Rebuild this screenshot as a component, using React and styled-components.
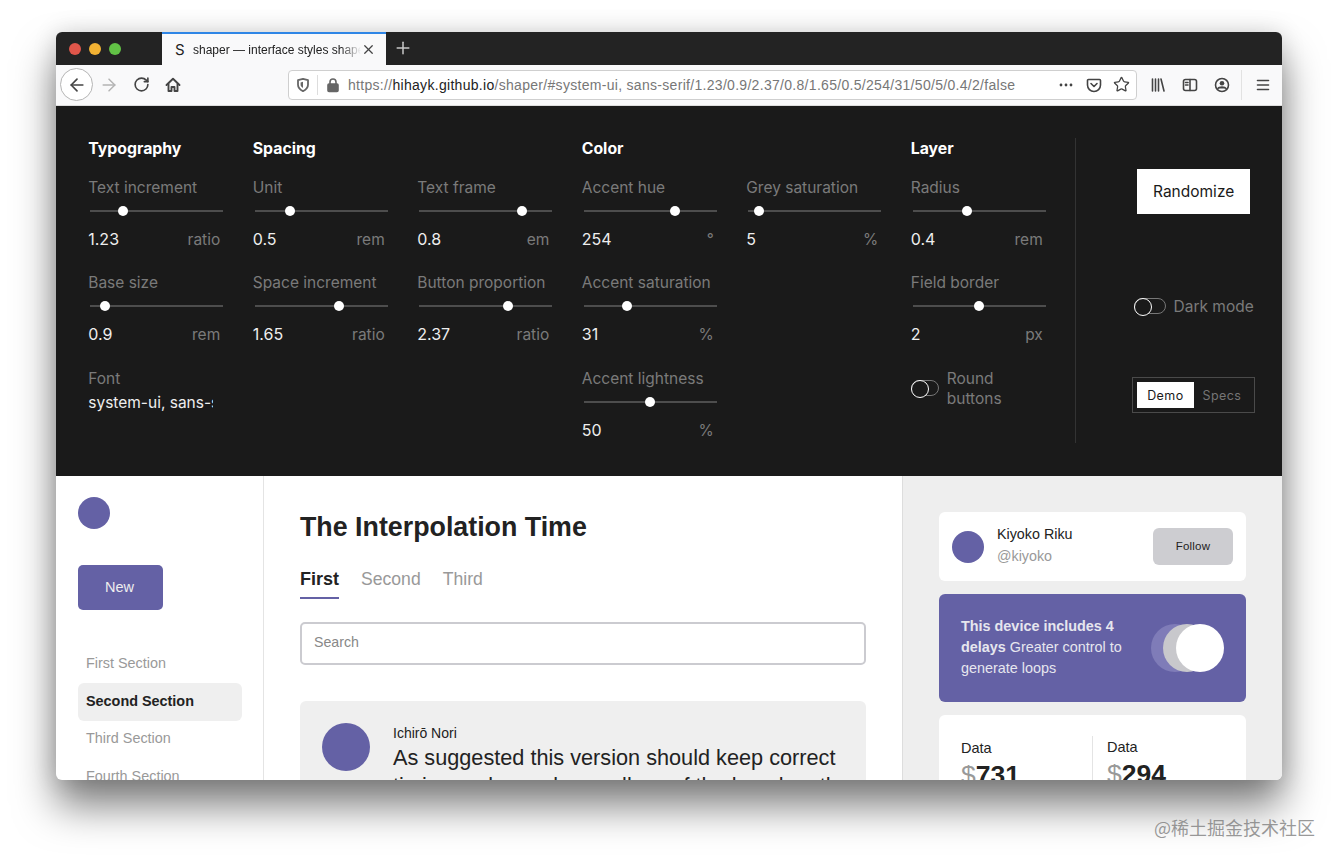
import React from 'react';
import styled, { createGlobalStyle } from 'styled-components';
import { ArrowLeft, ArrowRight, RotateCw, Star, Plus, X } from 'lucide-react';

const accent = '#6461a5';
const darkBg = '#1a1a1a';
const helvetica = '"Liberation Sans", Arial, sans-serif';

const GlobalStyle = createGlobalStyle`
  * { box-sizing: border-box; }
  html, body { margin: 0; height: 100%; background: #fff; overflow: hidden; }
  body { font-family: Inter, sans-serif; }
`;

const Page = styled.div`
  position: relative;
  height: 860px;
  padding: 32px 56px;
`;

const Watermark = styled.div`
  position: absolute;
  left: 1154px;
  top: 816px;
  font-family: "Noto Sans CJK SC", sans-serif;
  font-size: 18px;
  line-height: 22px;
  color: rgba(120, 120, 120, 0.75);
  white-space: nowrap;
`;

const Window = styled.div`
  height: 748px;
  display: flex;
  flex-direction: column;
  border-radius: 6px;
  overflow: hidden;
  background: #fff;
  box-shadow: 0 26px 40px rgba(0, 0, 0, 0.5), 0 0 24px rgba(0, 0, 0, 0.14);
`;

/* browser chrome */
const TabBar = styled.div`
  height: 33px;
  flex: none;
  display: flex;
  align-items: center;
  background: #232323;
`;

const Lights = styled.div`
  width: 106px;
  padding-left: 13px;
  display: flex;
  gap: 8px;
`;

const Light = styled.span`
  width: 12px;
  height: 12px;
  border-radius: 50%;
  background: ${p => p.$color};
`;

const Tab = styled.div`
  width: 224px;
  height: 33px;
  display: flex;
  align-items: center;
  padding: 0 10px 0 13px;
  background: #f9f9fa;
  border-top: 2px solid #2f86e6;
  color: #222;
`;

const Favicon = styled.span`
  width: 18px;
  font-size: 15px;
  font-family: Inter, sans-serif;
`;

const TabTitle = styled.span`
  flex: 1;
  font-family: ${helvetica};
  font-size: 12px;
  white-space: nowrap;
  overflow: hidden;
  -webkit-mask-image: linear-gradient(to right, #000 88%, transparent 100%);
  mask-image: linear-gradient(to right, #000 88%, transparent 100%);
`;

const NewTab = styled.span`
  margin: 0 0 2px 7px;
  display: flex;
  color: #c8c8c8;
`;

const Toolbar = styled.div`
  height: 41px;
  flex: none;
  display: flex;
  align-items: center;
  padding: 0 0 1px 4px;
  background: #f9f9fa;
  border-bottom: 1px solid #ddd;
  color: #444;
`;

const BackButton = styled.span`
  width: 33px;
  height: 33px;
  display: flex;
  align-items: center;
  justify-content: center;
  border: 1px solid #b5b5b5;
  border-radius: 50%;
  background: #fff;
`;

const NavIcon = styled.span`
  width: 32px;
  display: flex;
  justify-content: center;
  color: ${p => (p.$dim ? '#b4b4b4' : 'inherit')};
`;

const UrlBar = styled.div`
  width: 849px;
  height: 30px;
  margin-left: 99px;
  display: flex;
  align-items: center;
  background: #fff;
  border: 1px solid #cfcfcf;
  border-radius: 4px;
  padding: 0 6px;
  color: #666;
`;

const UrlDivider = styled.span`
  width: 1px;
  height: 20px;
  margin: 0 7px 0 6px;
  background: #ddd;
`;

const UrlText = styled.span`
  flex: 1;
  margin-left: 7px;
  font-family: ${helvetica};
  font-size: 14px;
  letter-spacing: 0.3px;
  color: #777;
  white-space: nowrap;
  overflow: hidden;
  b { font-weight: 400; color: #222; }
`;

const UrlActions = styled.span`
  display: flex;
  align-items: center;
  gap: 12px;
  color: #444;
  svg:last-child { margin-left: -1px; }
`;

const ToolGroup = styled.div`
  display: flex;
  align-items: center;
  margin-left: 5px;
`;

const ToolDivider = styled.span`
  width: 1px;
  height: 30px;
  margin: 0 5px 0 3px;
  background: #e2e2e2;
`;

/* control panel */
const Panel = styled.div`
  height: 370px;
  flex: none;
  display: flex;
  padding: 32px 26px 33px 32.25px;
  background: ${darkBg};
  color: #eee;
`;

const Section = styled.section`
  width: ${p => p.$span * 164.5}px;
  flex: none;
`;

const SectionTitle = styled.h3`
  margin: 0 0 18px;
  padding-top: 1px;
  font-size: 15.8px;
  line-height: 20px;
  font-weight: 700;
  color: #fff;
`;

const SectionColumns = styled.div`
  display: flex;
`;

const SectionColumn = styled.div`
  width: 164.5px;
  flex: none;
`;

const Control = styled.div`
  width: 135px;
  height: 95px;
  &:nth-child(2) { height: 96px; }
`;

const ControlLabel = styled.div`
  padding-top: 1px;
  margin-bottom: -1px;
  font-size: 15.5px;
  line-height: 20px;
  color: #7a7a7a;
  white-space: ${p => (p.$wrap ? 'normal' : 'nowrap')};
`;

const Track = styled.div`
  position: relative;
  height: 2px;
  width: 133px;
  margin: 13px 0 17px 2px;
  background: #4d4d4d;
`;

const Thumb = styled.span`
  position: absolute;
  left: ${p => p.$at}px;
  top: -4px;
  width: 10px;
  height: 10px;
  margin-left: -5px;
  border-radius: 50%;
  background: #fff;
`;

const ValueRow = styled.div`
  display: flex;
  justify-content: space-between;
  align-items: baseline;
  padding-right: 3px;
  font-size: 16px;
  line-height: 20px;
`;

const Unit = styled.span`
  font-size: 15.5px;
  color: #7a7a7a;
`;

const FontValue = styled.div`
  width: 125px;
  margin-top: 4px;
  padding-top: 1px;
  overflow: hidden;
  white-space: nowrap;
  font-size: 15.5px;
  line-height: 20px;
`;

const ToggleRow = styled.div`
  display: flex;
  align-items: center;
  gap: 8px;
`;

const Toggle = styled.span`
  position: relative;
  width: ${p => p.$width}px;
  height: 16px;
  flex: none;
  border: 1px solid #777;
  border-radius: 8px;
  &::before {
    content: '';
    position: absolute;
    left: -1px;
    top: -1px;
    width: 16px;
    height: 16px;
    border: 1.5px solid #fff;
    border-radius: 50%;
    background: ${darkBg};
  }
`;

const Tools = styled.div`
  flex: 1;
  display: flex;
  flex-direction: column;
  align-items: center;
  padding: 31px 0 30px 55px;
  border-left: 1px solid #333;
`;

const Randomize = styled.button`
  width: 113px;
  height: 45px;
  padding: 0;
  border: 0;
  background: #fff;
  color: #1a1a1a;
  font-family: Inter, sans-serif;
  font-size: 15.5px;
`;

const DarkMode = styled(ToggleRow)`
  margin-top: 82px;
`;

const Segmented = styled.div`
  margin-top: auto;
  width: 123px;
  height: 36px;
  flex: none;
  display: flex;
  padding: 4px;
  border: 1px solid #4a4a4a;
`;

const Segment = styled.span`
  flex: 1;
  display: flex;
  align-items: center;
  justify-content: center;
  font-size: 12.5px;
  letter-spacing: 0.4px;
  background: ${p => (p.$active ? '#fff' : 'transparent')};
  color: ${p => (p.$active ? '#1a1a1a' : '#757575')};
`;

/* demo below the panel */
const Demo = styled.div`
  flex: 1;
  min-height: 0;
  display: flex;
  overflow: hidden;
  font-family: ${helvetica};
  color: #222;
`;

const Sidebar = styled.aside`
  width: 208px;
  flex: none;
  padding: 21px 21px 0 22px;
  border-right: 1px solid #e4e4e4;
`;

const Avatar = styled.span`
  display: block;
  width: ${p => p.$size}px;
  height: ${p => p.$size}px;
  flex: none;
  border-radius: 50%;
  background: ${accent};
`;

const NewButton = styled.button`
  display: block;
  width: 85px;
  height: 45px;
  margin: 36px 0 34px;
  padding: 0 2px 2px 0;
  border: 0;
  border-radius: 5px;
  background: ${accent};
  color: #eee;
  font-family: ${helvetica};
  font-size: 14.5px;
`;

const NavItem = styled.div`
  height: 38px;
  margin-bottom: ${p => p.$gap || 0}px;
  padding: 0 0 ${p => (p.$active ? 2 : 0)}px 8px;
  display: flex;
  align-items: center;
  border-radius: 6px;
  font-size: 14.4px;
  font-weight: ${p => (p.$active ? 700 : 400)};
  color: ${p => (p.$active ? '#222' : '#999')};
  background: ${p => (p.$active ? '#efefef' : 'transparent')};
`;

const Main = styled.main`
  flex: 1;
  min-width: 0;
  padding: 33px 36px 0;
`;

const Title = styled.h1`
  margin: 0;
  font-size: 26.8px;
  line-height: 36px;
  font-weight: 700;
  color: #222;
`;

const Tabs = styled.div`
  margin-top: 21px;
  display: flex;
  gap: 22px;
`;

const TabLink = styled.span`
  height: 33px;
  font-size: ${p => (p.$active ? 18 : 17.6)}px;
  line-height: 26px;
  font-weight: ${p => (p.$active ? 700 : 400)};
  color: ${p => (p.$active ? '#222' : '#999')};
  border-bottom: 2px solid ${p => (p.$active ? accent : 'transparent')};
`;

const SearchBox = styled.div`
  height: 43px;
  margin-top: 23px;
  padding: 0 0 3px 12px;
  display: flex;
  align-items: center;
  border: 2px solid #cbcbd0;
  border-radius: 5px;
  font-size: 14.2px;
  color: #888;
`;

const Post = styled.div`
  margin-top: 36px;
  height: 140px;
  display: flex;
  gap: 23px;
  padding: 22px;
  background: #efefef;
  border-radius: 6px;
`;

const PostAuthor = styled.div`
  font-size: 14px;
  line-height: 20px;
`;

const PostText = styled.div`
  margin-top: 1px;
  font-size: 21.7px;
  line-height: 28px;
  color: #222;
`;

const Aside = styled.aside`
  width: 380px;
  flex: none;
  display: flex;
  flex-direction: column;
  gap: 13px;
  padding: 36px 36px 0;
  background: #eee;
  border-left: 1px solid #ddd;
`;

const Card = styled.div`
  flex: none;
  height: ${p => p.$height}px;
  border-radius: 6px;
  background: ${p => (p.$accent ? accent : '#fff')};
`;

const ProfileCard = styled(Card)`
  display: flex;
  align-items: center;
  padding: 0 13px;
`;

const ProfileText = styled.div`
  flex: 1;
  margin-left: 13px;
  padding-bottom: 4px;
  line-height: 22px;
`;

const ProfileName = styled.div`
  font-size: 14.3px;
`;

const ProfileHandle = styled.div`
  font-size: 14.3px;
  color: #999;
`;

const FollowButton = styled.button`
  width: 80px;
  height: 37px;
  padding: 0 0 2px;
  border: 0;
  border-radius: 6px;
  background: #cdcdd1;
  color: #222;
  font-family: ${helvetica};
  font-size: 11.5px;
  letter-spacing: 0.2px;
`;

const DeviceCard = styled(Card)`
  display: flex;
  align-items: center;
  padding: 0 22px;
  color: #e6e6ee;
  font-size: 14.4px;
  line-height: 21px;
`;

const DeviceText = styled.div`
  width: 180px;
  margin-bottom: 2px;
  strong { font-weight: 700; }
`;

const Discs = styled.div`
  margin-left: auto;
  display: flex;
`;

const Disc = styled.span`
  width: 48px;
  height: 48px;
  margin-left: ${p => p.$overlap}px;
  border-radius: 50%;
  background: ${p => p.$color};
`;

const DataCard = styled(Card)`
  display: flex;
  padding: 21px 22px 0;
`;

const DataCell = styled.div`
  width: ${p => (p.$divided ? 'auto' : '131px')};
  flex: ${p => (p.$divided ? 1 : 'none')};
  padding-top: ${p => (p.$divided ? '1px' : '2px')};
  padding-left: ${p => (p.$divided ? '14px' : '0')};
  border-left: ${p => (p.$divided ? '1px solid #e4e4e4' : '0')};
`;

const DataLabel = styled.div`
  font-size: 14.5px;
  line-height: 20px;
`;

const DataValue = styled.div`
  font-size: 26.5px;
  line-height: 34px;
  font-weight: 700;
  color: #222;
  span { font-weight: 400; color: #999; }
`;

/* firefox toolbar glyphs */
const Glyph = ({ size = 16, weight = 1.6, children }) => (
  <svg width={size} height={size} viewBox="0 0 16 16" fill="none" stroke="currentColor" strokeWidth={weight} strokeLinecap="round" strokeLinejoin="round">
    {children}
  </svg>
);

const sections = [
  {
    title: 'Typography',
    columns: [[
      { label: 'Text increment', at: 33, value: '1.23', unit: 'ratio' },
      { label: 'Base size', at: 15, value: '0.9', unit: 'rem' },
      { label: 'Font', font: 'system-ui, sans-serif' },
    ]],
  },
  {
    title: 'Spacing',
    columns: [
      [
        { label: 'Unit', at: 35, value: '0.5', unit: 'rem' },
        { label: 'Space increment', at: 84, value: '1.65', unit: 'ratio' },
      ],
      [
        { label: 'Text frame', at: 103, value: '0.8', unit: 'em' },
        { label: 'Button proportion', at: 89, value: '2.37', unit: 'ratio' },
      ],
    ],
  },
  {
    title: 'Color',
    columns: [
      [
        { label: 'Accent hue', at: 91, value: '254', unit: '°' },
        { label: 'Accent saturation', at: 43, value: '31', unit: '%' },
        { label: 'Accent lightness', at: 66, value: '50', unit: '%' },
      ],
      [{ label: 'Grey saturation', at: 11, value: '5', unit: '%' }],
    ],
  },
  {
    title: 'Layer',
    columns: [[
      { label: 'Radius', at: 54, value: '0.4', unit: 'rem' },
      { label: 'Field border', at: 66, value: '2', unit: 'px' },
      { toggle: 'Round buttons' },
    ]],
  },
];

function ControlItem({ item }) {
  if (item.toggle) {
    return (
      <Control>
        <ToggleRow>
          <Toggle $width={28} />
          <ControlLabel $wrap>{item.toggle}</ControlLabel>
        </ToggleRow>
      </Control>
    );
  }
  if (item.font) {
    return (
      <Control>
        <ControlLabel>{item.label}</ControlLabel>
        <FontValue>{item.font}</FontValue>
      </Control>
    );
  }
  return (
    <Control>
      <ControlLabel>{item.label}</ControlLabel>
      <Track><Thumb $at={item.at} /></Track>
      <ValueRow>
        <span>{item.value}</span>
        <Unit>{item.unit}</Unit>
      </ValueRow>
    </Control>
  );
}

function BrowserChrome() {
  return (
    <>
      <TabBar>
        <Lights>
          <Light $color="#e0564a" />
          <Light $color="#f2b233" />
          <Light $color="#62c246" />
        </Lights>
        <Tab>
          <Favicon>S</Favicon>
          <TabTitle>shaper — interface styles shaper</TabTitle>
          <X size={15} strokeWidth={2} color="#444" />
        </Tab>
        <NewTab><Plus size={20} strokeWidth={1.8} /></NewTab>
      </TabBar>
      <Toolbar>
        <BackButton><ArrowLeft size={20} strokeWidth={2} /></BackButton>
        <NavIcon $dim><ArrowRight size={20} strokeWidth={1.8} /></NavIcon>
        <NavIcon><RotateCw size={17} strokeWidth={2.3} /></NavIcon>
        <NavIcon>
          <Glyph weight={1.9}>
            <path d="M1.500 8 8 1.800 14.500 8" />
            <path d="M3.500 7v7h3v-4h3v4h3V7" />
          </Glyph>
        </NavIcon>
        <UrlBar>
          <Glyph weight={1.8}>
            <path d="M8 1.800 3 3.200v4.600c0 3 2.200 5 5 6.400 2.800-1.400 5-3.400 5-6.400V3.200z" />
            <path d="M8 4.800 5.600 5.500v2.300c0 1.400 1 2.400 2.400 3.200z" fill="currentColor" stroke="none" />
          </Glyph>
          <UrlDivider />
          <Glyph>
            <path d="M5 7V5a3 3 0 0 1 6 0v2" />
            <rect x="3" y="7" width="10" height="7.500" rx="1" fill="currentColor" />
          </Glyph>
          <UrlText>https://<b>hihayk.github.io</b>/shaper/#system-ui, sans-serif/1.23/0.9/2.37/0.8/1.65/0.5/254/31/50/5/0.4/2/false</UrlText>
          <UrlActions>
            <Glyph>
              <circle cx="3" cy="8" r="1.400" fill="currentColor" stroke="none" />
              <circle cx="8" cy="8" r="1.400" fill="currentColor" stroke="none" />
              <circle cx="13" cy="8" r="1.400" fill="currentColor" stroke="none" />
            </Glyph>
            <Glyph>
              <path d="M2.500 2.500h11a1 1 0 0 1 1 1V8a6.500 6.500 0 0 1-13 0V3.500a1 1 0 0 1 1-1z" />
              <path d="M5 6.500 8 9.500l3-3" />
            </Glyph>
            <Star size={17} strokeWidth={1.8} />
          </UrlActions>
        </UrlBar>
        <ToolGroup>
          <NavIcon>
            <Glyph>
              <path d="M2.500 2v12M5.500 2v12M8.500 2v12M11 2l3 12" />
            </Glyph>
          </NavIcon>
          <NavIcon>
            <Glyph>
              <rect x="1.500" y="2.500" width="13" height="11" rx="2" />
              <path d="M8 2.500v11M3.500 5.500h2.500M3.500 8h2.500" />
            </Glyph>
          </NavIcon>
          <NavIcon>
            <Glyph>
              <circle cx="8" cy="8" r="6.500" />
              <circle cx="8" cy="6.200" r="2.300" fill="currentColor" stroke="none" />
              <path d="M4 11.500c1-2 7-2 8 0" fill="currentColor" />
            </Glyph>
          </NavIcon>
          <ToolDivider />
          <NavIcon>
            <Glyph>
              <path d="M2.500 3.500h11M2.500 8h11M2.500 12.500h11" />
            </Glyph>
          </NavIcon>
        </ToolGroup>
      </Toolbar>
    </>
  );
}

export default function App() {
  return (
    <Page>
      <GlobalStyle />
      <Window>
        <BrowserChrome />
        <Panel>
          {sections.map(section => (
            <Section key={section.title} $span={section.columns.length}>
              <SectionTitle>{section.title}</SectionTitle>
              <SectionColumns>
                {section.columns.map((column, i) => (
                  <SectionColumn key={i}>
                    {column.map((item, j) => <ControlItem key={j} item={item} />)}
                  </SectionColumn>
                ))}
              </SectionColumns>
            </Section>
          ))}
          <Tools>
            <Randomize>Randomize</Randomize>
            <DarkMode>
              <Toggle $width={32} />
              <ControlLabel>Dark mode</ControlLabel>
            </DarkMode>
            <Segmented>
              <Segment $active>Demo</Segment>
              <Segment>Specs</Segment>
            </Segmented>
          </Tools>
        </Panel>
        <Demo>
          <Sidebar>
            <Avatar $size={32} />
            <NewButton>New</NewButton>
            <NavItem $gap={1}>First Section</NavItem>
            <NavItem $active $gap={-2}>Second Section</NavItem>
            <NavItem>Third Section</NavItem>
            <NavItem>Fourth Section</NavItem>
          </Sidebar>
          <Main>
            <Title>The Interpolation Time</Title>
            <Tabs>
              <TabLink $active>First</TabLink>
              <TabLink>Second</TabLink>
              <TabLink>Third</TabLink>
            </Tabs>
            <SearchBox>Search</SearchBox>
            <Post>
              <Avatar $size={48} />
              <div>
                <PostAuthor>Ichirō Nori</PostAuthor>
                <PostText>As suggested this version should keep correct timing and sound regardless of the loop length</PostText>
              </div>
            </Post>
          </Main>
          <Aside>
            <ProfileCard $height={69}>
              <Avatar $size={32} />
              <ProfileText>
                <ProfileName>Kiyoko Riku</ProfileName>
                <ProfileHandle>@kiyoko</ProfileHandle>
              </ProfileText>
              <FollowButton>Follow</FollowButton>
            </ProfileCard>
            <DeviceCard $accent $height={108}>
              <DeviceText><strong>This device includes 4 delays</strong> Greater control to generate loops</DeviceText>
              <Discs>
                <Disc $overlap={0} $color="#7f7cb8" />
                <Disc $overlap={-36} $color="#c8c8cc" />
                <Disc $overlap={-35} $color="#fff" />
              </Discs>
            </DeviceCard>
            <DataCard $height={120}>
              <DataCell>
                <DataLabel>Data</DataLabel>
                <DataValue><span>$</span>731</DataValue>
              </DataCell>
              <DataCell $divided>
                <DataLabel>Data</DataLabel>
                <DataValue><span>$</span>294</DataValue>
              </DataCell>
            </DataCard>
          </Aside>
        </Demo>
      </Window>
      <Watermark>@稀土掘金技术社区</Watermark>
    </Page>
  );
}
